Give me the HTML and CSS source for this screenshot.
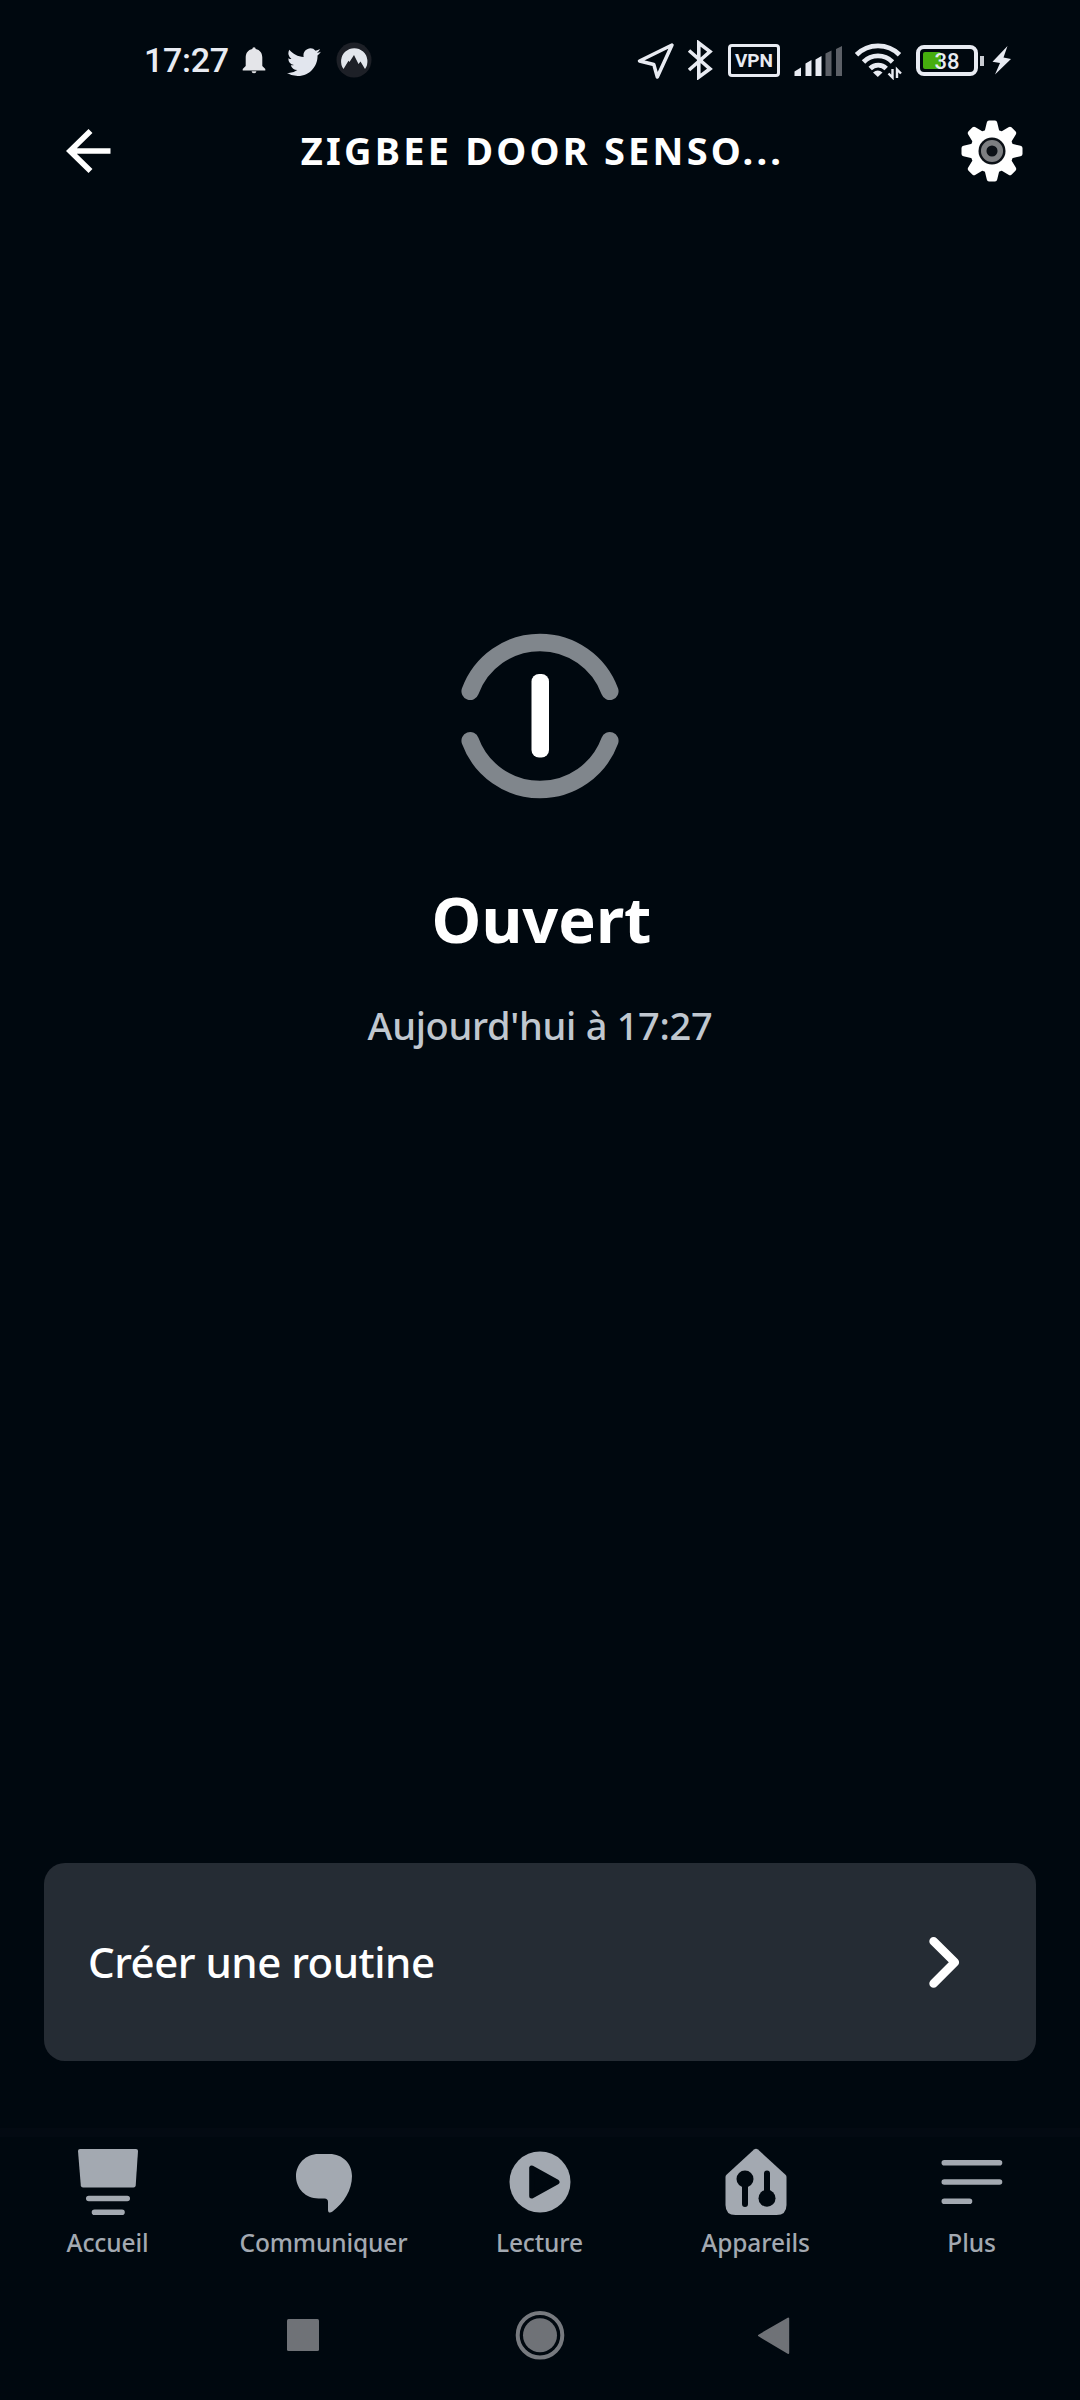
FILE: index.html
```html
<!DOCTYPE html>
<html lang="fr">
<head>
<meta charset="utf-8">
<title>Zigbee Door Sensor</title>
<link rel="stylesheet" href="styles.css">
</head>
<body>
<div class="screen">
  <div class="status">
    <div class="status-left">
      <span class="clock">17:27</span>
      <svg class="bell" width="24" height="40" viewBox="242 40 24 40"><path fill="#e4e5e9" d="M252.300 49a1.700 1.700 0 0 1 3.400 0c4.300 1 6.600 4 6.600 8.500v8.500l3 3v1.500h-22.600V69l3-3v-8.500c0-4.500 2.300-7.500 6.600-8.500zM251.600 71.300h4.800a2.400 2 0 0 1-4.800 0z"/></svg>
      <svg class="bird" width="34" height="40" viewBox="0 -3.700 24 28.200"><path fill="#e2e6ee" d="M23.950 4.570a10 10 0 0 1-2.820.77 4.960 4.960 0 0 0 2.160-2.720c-.95.550-2 .95-3.130 1.180a4.920 4.920 0 0 0-8.380 4.480C7.690 8.090 4.070 6.130 1.640 3.160a4.930 4.930 0 0 0 1.520 6.570 4.900 4.900 0 0 1-2.230-.61v.06a4.920 4.920 0 0 0 3.950 4.830 5 5 0 0 1-2.210.08 4.930 4.930 0 0 0 4.600 3.420A9.870 9.870 0 0 1 0 19.540a13.990 13.990 0 0 0 7.550 2.210c9.050 0 14-7.500 14-13.980 0-.21 0-.42-.02-.63a9.940 9.940 0 0 0 2.420-2.570z"/></svg>
      <svg class="peak" width="36" height="40" viewBox="336 40 36 40"><circle cx="354" cy="60" r="17.500" fill="#1d2027"/><path fill="#e2e6ec" d="M343.500 69a13.200 13.200 0 1 1 21.500 0l-4.500-7.500-2 2.500-4.500-9-4.500 7-1-1.200z"/></svg>
    </div>
    <div class="status-right">
      <svg width="38" height="40" viewBox="637 40 38 40"><path fill="none" stroke="#e8ebf2" stroke-width="3.500" stroke-linejoin="round" d="M672 45L639.500 61l14.300 3.500L657.300 77z"/></svg>
      <svg width="26" height="40" viewBox="687 40 26 40"><path fill="none" stroke="#e8ebf2" stroke-width="3.600" d="M689 50.500l21 18.300-11.200 8.300V43L710 51.500 689 70"/></svg>
      <span class="vpn">VPN</span>
      <svg class="signal" width="50" height="40" viewBox="793 40 50 40"><path fill="#e8ebf2" d="M794.500 76v-4.500l6.500-4V76zM805.500 76V63.500l6-3.500v16zM815.500 76V59.500l6-3.500v20z"/><path fill="#5c6067" d="M825.500 76V53.500l6-3v25.500zM836 76V49l6-3v30z"/></svg>
      <svg width="48" height="40" viewBox="854 40 48 40"><g fill="none" stroke="#e8ebf2" stroke-width="4.800"><path d="M856.500 54.800a30.500 30.500 0 0 1 43 0M863.500 62a20.300 20.300 0 0 1 29 0M870.200 68.500a11.200 11.200 0 0 1 16 0"/></g><path fill="#e8ebf2" d="M873 72.500a7.500 7.500 0 0 1 9.500 0l-4.700 4.500z"/><path fill="none" stroke="#e8ebf2" stroke-width="2.400" d="M892.500 69v8.500l-4-4M897 78v-8.500l4 4"/></svg>
      <div class="battery"><span class="level"></span><span class="percent">38</span></div>
      <svg width="20" height="40" viewBox="992 40 20 40"><path fill="#e8ebf2" d="M1007.500 46L992.500 61.800l7.500 1.200-5 11.500L1011 59l-7.500-1.500z"/></svg>
    </div>
  </div>

  <header class="header">
    <svg width="46" height="48" viewBox="66 127 46 48"><path fill="none" stroke="#fff" stroke-width="5.600" d="M110.500 151H70M90.500 131L70 151l20.500 20"/></svg>
    <h1 class="title">ZIGBEE DOOR SENSO...</h1>
    <svg width="64" height="64" viewBox="-32 -32 64 64">
      <defs><path id="tooth" d="M-7.500-19L-5.200-28.500Q-4.800-30.500-3-30.500H3Q4.800-30.500 5.200-28.500L7.500-19z"/></defs>
      <g fill="#fff"><circle r="21.800"/><use href="#tooth"/><use href="#tooth" transform="rotate(45)"/><use href="#tooth" transform="rotate(90)"/><use href="#tooth" transform="rotate(135)"/><use href="#tooth" transform="rotate(180)"/><use href="#tooth" transform="rotate(225)"/><use href="#tooth" transform="rotate(270)"/><use href="#tooth" transform="rotate(315)"/></g>
      <circle r="13.500" fill="#0b1016"/><circle r="8.300" fill="none" stroke="#7d7f82" stroke-width="5.500"/>
    </svg>
  </header>

  <main class="main">
    <svg class="contact" width="170" height="170" viewBox="455 631 170 170"><g fill="none" stroke="#80868c" stroke-width="17.500" stroke-linecap="round"><path d="M470.200 691.300a74.300 74.300 0 0 1 139.600 0M470.200 740.700a74.300 74.300 0 0 0 139.600 0"/></g><rect x="531.500" y="674" width="17.500" height="83.500" rx="7.500" fill="#fff"/></svg>
    <h2 class="state">Ouvert</h2>
    <p class="when">Aujourd'hui à 17:27</p>
  </main>

  <a class="card">
    <span class="card-label">Créer une routine</span>
    <svg width="34" height="54" viewBox="927 1935 34 54"><path fill="none" stroke="#fff" stroke-width="8.600" stroke-linecap="round" stroke-linejoin="round" d="M933.600 1941.300L954.800 1962.200 933.600 1983.500"/></svg>
  </a>

  <nav class="tabs">
    <a class="tab"><svg width="72" height="72" viewBox="72 2145 72 72"><path fill="#a3a9b1" d="M80 2149h56q2 0 2 2l-2.300 34.500q-.2 2-2.200 2h-50.500q-2 0-2.200-2L78 2151q0-2 2-2z"/><path stroke="#a3a9b1" stroke-width="5.600" stroke-linecap="round" d="M88.800 2198.500h38.400M94.500 2212.300h27.500"/></svg><span>Accueil</span></a>
    <a class="tab"><svg width="72" height="72" viewBox="288 2145 72 72"><path fill="#a3a9b1" d="M318.500 2154h11c13 0 22.500 9.500 22.500 22 0 14-8 27-19.500 35.500-2.500 2-4.500 1.200-4.500-1.500v-8q0-3.500-3.500-3.500h-6c-13 0-22.500-10-22.500-22.200s9.500-22.300 22.500-22.300z"/></svg><span>Communiquer</span></a>
    <a class="tab"><svg width="72" height="72" viewBox="504 2145 72 72"><circle cx="540" cy="2182" r="30.500" fill="#a3a9b1"/><path fill="#00080f" stroke="#00080f" stroke-width="5" stroke-linejoin="round" d="M531.700 2168v28l25.300-14z"/></svg><span>Lecture</span></a>
    <a class="tab"><svg width="72" height="72" viewBox="720 2145 72 72"><path fill="#a3a9b1" d="M754 2149.500q2-1.500 4 0l27.500 25.300q1 1 1 2.200v28q0 10-10 10h-41q-10 0-10-10v-28q0-1.200 1-2.200z"/><g stroke="#00080f" stroke-width="6" stroke-linecap="round"><path d="M745 2179v25M767 2173.500v25"/></g><circle cx="745" cy="2179" r="8.500" fill="#00080f"/><circle cx="767" cy="2198.200" r="8.500" fill="#00080f"/></svg><span>Appareils</span></a>
    <a class="tab"><svg width="72" height="72" viewBox="936 2145 72 72"><path stroke="#a3a9b1" stroke-width="5.600" stroke-linecap="round" d="M944.300 2162.700h55.200M944.300 2182h55.200M944.300 2201.300h25.200"/></svg><span>Plus</span></a>
  </nav>

  <div class="system">
    <svg width="32" height="50" viewBox="287 2310 32 50"><rect x="287" y="2319" width="32" height="32" rx="1.500" fill="#6f7277"/></svg>
    <svg width="54" height="50" viewBox="511.500 2310 54 50"><circle cx="540.500" cy="2335.200" r="22.300" fill="none" stroke="#777a7f" stroke-width="4"/><circle cx="540.500" cy="2335.200" r="17" fill="#6f7277"/></svg>
    <svg width="33" height="50" viewBox="757 2310 33 50"><path fill="#6f7277" stroke="#6f7277" stroke-width="2" stroke-linejoin="round" d="M788.200 2318.500v34.500L759 2335.500z"/></svg>
  </div>
</div>
</body>
</html>
```
FILE: styles.css
```css
* { box-sizing: border-box; margin: 0; padding: 0; }
body { background: #00080f; }
svg { display: block; flex: none; }

.screen {
  width: 1080px;
  height: 2400px;
  display: flex;
  flex-direction: column;
  background: #00080f;
  color: #fff;
  font-family: "Noto Sans", "Open Sans", sans-serif;
}

.status {
  height: 80px;
  padding: 40px 68px 0 144px;
  display: flex;
  justify-content: space-between;
  font-family: Roboto, sans-serif;
  color: #e8ebf2;
}
.status-left, .status-right { display: flex; align-items: center; height: 40px; }
.clock { width: 98px; font-size: 34px; font-weight: 500; line-height: 40px; letter-spacing: -.3px; white-space: nowrap; }
.bird { margin-left: 21px; }
.peak { margin-left: 15px; }
.status-right { gap: 12px; }
.vpn {
  width: 52px;
  height: 33px;
  margin: 0 1px 0 3px;
  border: 3.500px solid #e8ebf2;
  border-radius: 4px;
  font-size: 19px;
  font-weight: 700;
  line-height: 27px;
  text-align: center;
}
.signal { margin-right: -1px; }
.battery {
  position: relative;
  width: 62px;
  height: 31px;
  margin: 0 2px;
  border: 4px solid #e8ebf2;
  border-radius: 8px;
}
.battery::after {
  content: "";
  position: absolute;
  right: -10px;
  top: 7px;
  width: 4px;
  height: 10px;
  background: #c9ccd2;
}
.level { position: absolute; left: 3px; top: 3px; width: 18px; height: 17px; border-radius: 2px; background: #46ad0e; }
.percent { position: absolute; inset: 0; font-size: 22px; font-weight: 500; line-height: 25px; text-align: center; }

.header {
  height: 142px;
  padding: 0 56px 0 66px;
  display: flex;
  align-items: center;
  justify-content: space-between;
}
.title { margin: 0 0 2px 13px; font-size: 38px; line-height: 50px; font-weight: 700; letter-spacing: 3.200px; white-space: nowrap; }

.main {
  flex: 1;
  padding-top: 409px;
  display: flex;
  flex-direction: column;
  align-items: center;
}
.state { margin: 76px 0 0 3px; font-size: 63px; line-height: 84px; font-weight: 700; }
.when { margin-top: 38px; font-size: 38px; line-height: 52px; font-weight: 500; letter-spacing: -.3px; color: #c0c7cf; }

.card {
  height: 198px;
  margin: 0 44px 67px;
  padding: 0 75px 0 44px;
  display: flex;
  align-items: center;
  justify-content: space-between;
  background: #252c34;
  border-radius: 21px;
}
.card-label { font-size: 42px; line-height: 58px; font-weight: 500; letter-spacing: -.5px; }

.tabs {
  height: 144px;
  padding-top: 8px;
  border-top: 9px solid #030a12;
  display: grid;
  grid-template-columns: repeat(5, 1fr);
}
.tab { display: flex; flex-direction: column; align-items: center; font-size: 24.500px; line-height: 34px; font-weight: 500; letter-spacing: -.1px; color: #a3a9b1; }
.tab span { margin: 9px 1px 0 0; }

.system {
  height: 128px;
  padding: 38px 290px 0 287px;
  display: flex;
  justify-content: space-between;
}
```
